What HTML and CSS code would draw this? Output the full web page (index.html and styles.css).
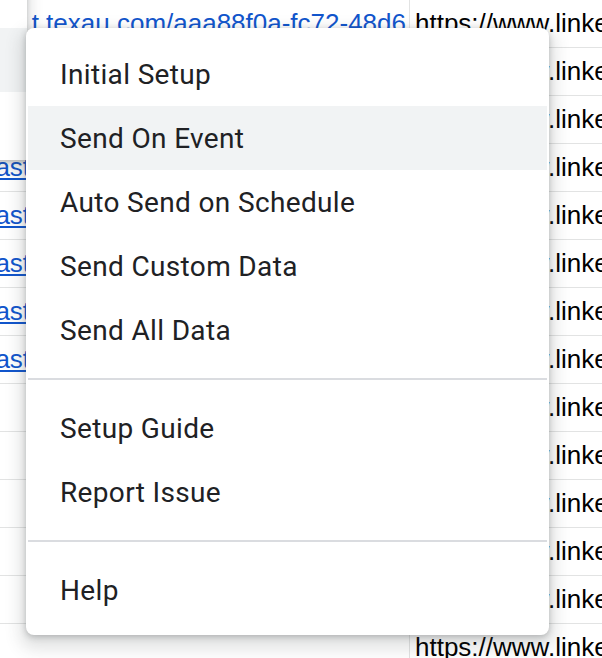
FILE: index.html
```html
<!DOCTYPE html>
<html>
<head>
    <meta charset="utf-8">
    <link rel="stylesheet" href="styles.css">
</head>
<body>

<div class="sheet">
    <div class="row">
        <div class="cell col-a"><a class="link">https://hooks.texau t texau.com/aaa88f0a-fc72-48d6</a></div>
        <div class="cell col-b">https://www.linkedin.com/in/</div>
    </div>
    <div class="row">
        <div class="cell col-a"></div>
        <div class="cell col-b">https://www.linkedin.com/in/</div>
    </div>
    <div class="row">
        <div class="cell col-a"></div>
        <div class="cell col-b">https://www.linkedin.com/in/</div>
    </div>
    <div class="row">
        <div class="cell col-a left"><a class="link">podcast.texau.com/aaa88f0a</a></div>
        <div class="cell col-b">https://www.linkedin.com/in/</div>
    </div>
    <div class="row">
        <div class="cell col-a left"><a class="link">podcast.texau.com/aaa88f0a</a></div>
        <div class="cell col-b">https://www.linkedin.com/in/</div>
    </div>
    <div class="row">
        <div class="cell col-a left"><a class="link">podcast.texau.com/aaa88f0a</a></div>
        <div class="cell col-b">https://www.linkedin.com/in/</div>
    </div>
    <div class="row">
        <div class="cell col-a left"><a class="link">podcast.texau.com/aaa88f0a</a></div>
        <div class="cell col-b">https://www.linkedin.com/in/</div>
    </div>
    <div class="row">
        <div class="cell col-a left"><a class="link">podcast.texau.com/aaa88f0a</a></div>
        <div class="cell col-b">https://www.linkedin.com/in/</div>
    </div>
    <div class="row">
        <div class="cell col-a"></div>
        <div class="cell col-b">https://www.linkedin.com/in/</div>
    </div>
    <div class="row">
        <div class="cell col-a"></div>
        <div class="cell col-b">https://www.linkedin.com/in/</div>
    </div>
    <div class="row">
        <div class="cell col-a"></div>
        <div class="cell col-b">https://www.linkedin.com/in/</div>
    </div>
    <div class="row">
        <div class="cell col-a"></div>
        <div class="cell col-b">https://www.linkedin.com/in/</div>
    </div>
    <div class="row">
        <div class="cell col-a"></div>
        <div class="cell col-b">https://www.linkedin.com/in/</div>
    </div>
    <div class="row">
        <div class="cell col-a"></div>
        <div class="cell col-b">https://www.linkedin.com/in/</div>
    </div>
</div>

<!-- parent menu, its open item keeps the hover colour -->
<div class="parent-menu">
    <div class="parent-item"></div>
    <div class="parent-item open"></div>
</div>

<div class="menu">
    <div class="menu-item">Initial Setup</div>
    <div class="menu-item hover">Send On Event</div>
    <div class="menu-item">Auto Send on Schedule</div>
    <div class="menu-item">Send Custom Data</div>
    <div class="menu-item">Send All Data</div>
    <div class="menu-sep"></div>
    <div class="menu-item">Setup Guide</div>
    <div class="menu-item">Report Issue</div>
    <div class="menu-sep"></div>
    <div class="menu-item">Help</div>
</div>

</body>
</html>
```

FILE: styles.css
```css
body {
    margin: 0;
    width: 602px;
    height: 658px;
    overflow: hidden;
    background-color: white;
    position: relative;
}

/* spreadsheet behind the menus */
.sheet {
    font-family: "Liberation Sans", Arial, sans-serif;
    font-size: 26px;
    color: black;
}

.row {
    display: grid;
    grid-template-columns: 410px 1fr;
    height: 48px;
    box-sizing: border-box;
    border-bottom: 1px solid #e2e3e3;
}

.cell {
    line-height: 47px;
    white-space: nowrap;
    overflow: hidden;
}

/* long urls stay pinned to the right edge, overflow is cut on the left */
.col-a {
    display: flex;
    justify-content: flex-end;
    border-right: 1px solid #e2e3e3;
    padding-right: 3px;
}

.col-a.left {
    justify-content: flex-start;
    padding-right: 0;
}

.col-a.left .link {
    margin-left: -61px;
    text-decoration: underline;
}

.col-b {
    padding-left: 5px;
}

.link {
    color: #1155cc;
    flex-shrink: 0;
}

/* menus */
.parent-menu {
    position: absolute;
    left: -200px;
    top: -36px;
    width: 227px;
    height: 196px;
    background-color: white;
    box-shadow: 0 4px 12px 4px rgba(60, 64, 67, 0.15), 0 2px 4px rgba(60, 64, 67, 0.25);
}

.parent-item {
    height: 64px;
}

.parent-item.open {
    background-color: #f1f3f4;
}

.menu {
    position: absolute;
    left: 26px;
    top: 28px;
    width: 523px;
    box-sizing: border-box;
    padding: 14px 2px 13px;
    background-color: white;
    border-radius: 8px;
    box-shadow: 0 8px 16px 6px rgba(60, 64, 67, 0.15), 0 2px 6px rgba(60, 64, 67, 0.3);
    font-family: Roboto, "Noto Sans", sans-serif;
    font-size: 28px;
    letter-spacing: 0.35px;
    color: #202124;
}

.menu-item {
    height: 64px;
    display: flex;
    align-items: center;
    padding-left: 32px;
}

.menu-item.hover {
    background-color: #f1f3f4;
}

.menu-sep {
    height: 2px;
    margin: 16px 0;
    background-color: #dadce0;
}
```
